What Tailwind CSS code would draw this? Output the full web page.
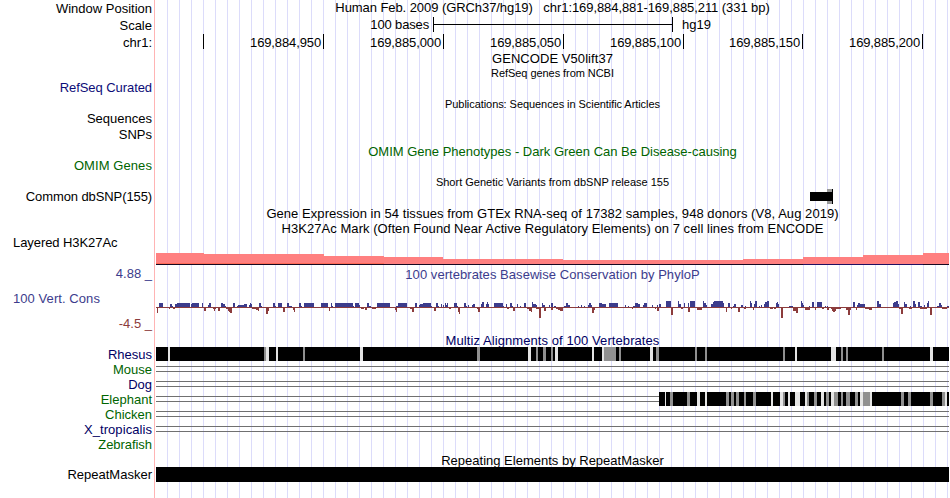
<!DOCTYPE html>
<html lang="en">
<head>
<meta charset="utf-8">
<title>Genome Browser</title>
<script src="https://cdn.jsdelivr.net/npm/@tailwindcss/browser@4"></script>
</head>
<body class="bg-white overflow-hidden">
<main class="flex w-[950px] h-[498px] overflow-hidden bg-white text-black text-[13px] leading-[15px] whitespace-nowrap font-['Liberation_Sans',Arial,sans-serif]">

  <!-- track labels -->
  <aside class="w-[154px] h-full shrink-0 flex flex-col items-end pt-px pr-[2px]">
    <div>Window Position</div>
    <div class="mt-[2px]">Scale</div>
    <div class="mt-[2px]">chr1:</div>
    <div class="mt-[30px] tracking-[-0.07px] text-[#0c0c78]">RefSeq Curated</div>
    <div class="mt-[16px]">Sequences</div>
    <div class="mt-px">SNPs</div>
    <div class="mt-[16px] tracking-[0.08px] text-[#006400]">OMIM Genes</div>
    <div class="mt-[16px] tracking-[-0.1px]">Common dbSNP(155)</div>
    <div class="mt-[31px] self-start pl-[13px] tracking-[-0.07px]">Layered H3K27Ac</div>
    <div class="mt-[16px] text-[#3c3c8c]">4.88 _</div>
    <div class="mt-[10px] self-start pl-[13px] tracking-[0.07px] text-[#3c3c8c]">100 Vert. Cons</div>
    <div class="mt-[10px] text-[#8c3c3c]">-4.5 _</div>
    <div class="mt-[16px] text-[#000064]">Rhesus</div>
    <div class="text-[#006400]">Mouse</div>
    <div class="text-[#000064]">Dog</div>
    <div class="text-[#006400]">Elephant</div>
    <div class="text-[#006400]">Chicken</div>
    <div class="tracking-[0.07px] text-[#000064]">X_tropicalis</div>
    <div class="tracking-[-0.05px] text-[#006400]">Zebrafish</div>
    <div class="mt-[15px]">RepeatMasker</div>
  </aside>
  <div class="w-px mr-px h-full shrink-0 bg-[#ffb4b4]"></div>

  <!-- tracks over the 5-base guide lines -->
  <section class="w-[793px] h-full shrink-0 flex flex-col text-center bg-[linear-gradient(to_right,#dcdcfa_1px,transparent_1px)] bg-[size:12px_12px] bg-[position:11px_0]">
    <div class="h-[17px] whitespace-pre tracking-[-0.07px]">Human Feb. 2009 (GRCh37/hg19)   chr1:169,884,881-169,885,211 (331 bp)</div>
    <div class="h-[17px] flex">
      <div class="w-[277px] pr-[4px] text-right tracking-[-0.15px]">100 bases</div>
      <div class="w-[240px] h-[15px] border-x border-black flex items-center"><div class="w-full h-px bg-black"></div></div>
      <div class="pl-[9px]">hg19</div>
    </div>
    <div class="h-[17px] flex text-right tracking-[-0.12px] [&>div]:h-[15px] [&>div]:border-r [&>div]:border-black [&>div]:pr-[2px] [&>div]:pt-px">
      <div class="w-[48px]"></div>
      <div class="w-[120px]">169,884,950</div>
      <div class="w-[120px]">169,885,000</div>
      <div class="w-[120px]">169,885,050</div>
      <div class="w-[120px]">169,885,100</div>
      <div class="w-[119px]">169,885,150</div>
      <div class="w-[120px]">169,885,200</div>
    </div>
    <div class="h-[16px] tracking-[0.06px]">GENCODE V50lift37</div>
    <div class="h-[31px] text-[11px] leading-[13px] tracking-[-0.06px]">RefSeq genes from NCBI</div>
    <div class="h-[46px] text-[11px] leading-[13px] tracking-[-0.06px]">Publications: Sequences in Scientific Articles</div>
    <div class="h-[32px] text-[#006400]">OMIM Gene Phenotypes - Dark Green Can Be Disease-causing</div>
    <div class="h-[13px] text-[11px] leading-[13px]">Short Genetic Variants from dbSNP release 155</div>
    <svg class="block w-full h-[17px] shrink-0" viewBox="156 189 793 17" shape-rendering="crispEdges">
      <path d="M827 189h5v15h-5z" fill="#999"/><path d="M810 192h22v9h-22zM832 189h1v15h-1z"/>
    </svg>
    <div class="h-[15px] tracking-[0.055px]">Gene Expression in 54 tissues from GTEx RNA-seq of 17382 samples, 948 donors (V8, Aug 2019)</div>
    <div class="h-[15px] tracking-[0.05px]">H3K27Ac Mark (Often Found Near Active Regulatory Elements) on 7 cell lines from ENCODE</div>
    <svg class="block w-full h-[31px] shrink-0" viewBox="156 236 793 31" shape-rendering="crispEdges">
      <path fill="#ff8080" d="M156 264V253H204V254H324V256H384V257H443V259H563V260H743V259H803V257H863V255H923V253H949V264z"/>
      <path fill="#ff6b57" d="M156 263h228v1h-228z"/>
      <path fill="#180820" d="M156 264h793v1h-793z"/><path fill="#201060" d="M803 264h120v1h-120z"/>
    </svg>
    <div class="h-[15px] tracking-[0.05px] text-[#3c3c8c]">100 vertebrates Basewise Conservation by PhyloP</div>
    <svg id="phylop" class="block w-full h-[51px] shrink-0" viewBox="156 282 793 51" shape-rendering="crispEdges"></svg>
    <div class="h-[14px] tracking-[0.08px] text-[#000064]">Multiz Alignments of 100 Vertebrates</div>
    <svg id="multiz" class="block w-full h-[106px] shrink-0" viewBox="156 347 793 106" shape-rendering="crispEdges"></svg>
    <div class="h-[14px]">Repeating Elements by RepeatMasker</div>
    <div class="h-[15px] bg-black"></div>
  </section>
</main>
<script>
const box = (x, y, w, h, c) => `<rect x="${x}" y="${y}" width="${w}" height="${h}" fill="${c}"/>`;

// conservation scores: start, end, height
const up = `159 163 4,170 172 3,172 173 1,175 180 3,177 190 4,191 192 3,192 199 4,202 203 4,208 209 2,209 211 4,221 223 4,223 225 3,225 226 1,233 235 4,237 238 1,238 247 2,244 247 3,249 250 2,250 251 4,251 252 3,259 261 4,261 262 1,273 275 4,275 276 1,278 282 4,287 289 4,289 292 1,299 301 4,301 302 1,304 314 4,304 305 2,321 328 4,331 332 4,332 333 1,335 353 4,353 354 1,355 359 4,359 360 2,367 369 4,369 371 1,377 390 4,398 407 4,396 398 1,415 417 4,419 421 2,420 423 3,423 431 4,431 432 1,436 438 4,438 439 1,441 442 3,443 444 2,445 446 4,446 448 2,447 448 4,454 457 4,457 458 1,464 466 4,466 467 1,468 469 2,472 474 2,473 475 3,481 482 3,482 484 5,486 487 3,487 488 5,488 489 3,494 503 4,503 504 1,506 507 3,510 512 4,512 513 1,517 518 3,520 521 1,524 526 4,532 533 5,533 536 3,536 537 2,542 543 4,543 545 2,549 550 2,551 553 4,554 556 1,564 566 1,566 568 4,568 570 2,578 579 1,581 582 2,584 585 1,588 589 2,589 591 4,591 592 2,599 602 4,602 606 3,609 618 4,625 626 2,628 629 1,633 635 1,635 638 4,638 640 3,643 644 2,644 647 4,652 653 2,657 658 2,659 661 3,666 671 6,668 670 4,678 679 6,679 681 3,684 685 4,688 689 4,690 695 6,703 704 6,704 706 4,706 707 2,711 713 3,713 714 5,714 723 6,723 724 4,728 730 4,733 734 1,734 736 3,741 743 2,745 746 1,750 751 6,751 752 4,754 755 3,755 757 6,759 760 1,761 762 2,764 765 3,765 767 5,767 769 6,776 777 4,777 779 3,777 778 5,789 793 1,801 802 6,802 803 4,803 804 2,809 810 1,812 814 5,817 822 5,825 826 1,827 828 1,853 855 5,857 858 2,858 860 4,860 865 3,877 879 6,879 881 3,893 894 4,894 896 5,896 898 6,898 899 3,904 905 5,905 907 3,910 911 1,913 915 6,915 916 3,918 920 5,920 922 1,924 925 2,927 928 4,928 929 6,937 939 1,939 941 4,941 942 2,947 949 1`;
const down = `157 158 6,169 170 2,173 175 2,204 206 4,213 216 2,214 215 4,218 220 4,226 228 2,228 229 4,229 232 5,230 232 6,252 256 2,256 258 3,258 259 4,266 268 7,268 269 4,283 285 5,293 295 3,294 295 5,329 330 4,361 364 2,365 367 3,372 376 2,395 396 3,396 397 5,410 412 2,412 414 5,434 436 4,449 451 2,458 459 5,459 460 7,477 478 2,478 480 5,507 509 2,513 515 4,527 529 2,529 531 4,531 532 5,536 539 2,539 541 11,544 546 4,551 553 3,556 558 2,558 563 3,560 563 4,592 594 6,594 595 3,632 633 2,655 656 2,657 659 4,671 673 8,681 683 2,688 690 5,697 702 3,718 719 1,726 727 5,731 732 2,738 740 5,744 746 2,753 754 3,770 773 2,774 776 2,781 783 11,793 798 4,796 798 6,805 810 3,815 816 3,822 824 2,827 829 3,831 841 2,832 836 4,833 835 5,846 851 3,848 850 8,856 857 3,865 872 2,869 872 3,899 903 2,901 903 7,909 912 2,920 927 2,930 932 8,942 947 2`;
const runs = s => s.split(',').map(r => r.trim().split(' ').map(Number));
document.getElementById('phylop').innerHTML =
  box(156, 307, 793, 1, '#8c3c3c') +
  runs(up).map(([a, b, h]) => box(a, 307 - h, b - a, h, '#3c3c8c')).join('') +
  runs(down).map(([a, b, h]) => box(a, 307, b - a, h, '#8c3c3c')).join('');

// alignment identity: start, end, shade (1 = no match, 0 = partial)
const rhesus = '168 170 1,264 266 0,266 269 1,276 278 1,303 305 0,360 363 1,477 480 0,528 531 1,536 538 0,543 546 0,551 553 0,555 558 1,592 594 1,602 604 1,604 616 0,619 621 0,650 653 1,656 659 0,695 697 0,705 707 0,783 785 0,795 797 1,831 836 1,841 843 0,846 848 0,882 884 0,930 933 1';
const elephant = '665 666 1,670 673 0,687 690 0,697 700 1,705 707 1,726 729 0,731 734 0,736 739 0,744 746 0,753 756 0,771 773 1,780 783 1,783 785 0,788 790 1,795 800 1,805 807 1,807 809 0,814 817 0,821 824 1,826 829 0,831 834 1,834 838 0,841 843 0,846 850 0,855 858 0,860 863 1,863 870 0,870 872 1,901 904 0,908 911 0,930 933 0,942 945 0,945 947 1';
const stripes = (s, y) => runs(s).map(([a, b, k]) => box(a, y, b - a, 14, k ? '#e4e4e4' : '#909090')).join('');
document.getElementById('multiz').innerHTML =
  [366, 381, 396, 411, 426].map(y => box(156, y, 793, 1, '#707070') + box(156, y + 5, 793, 1, '#707070')).join('') +
  box(156, 347, 793, 14, '#000') + stripes(rhesus, 347) +
  box(659, 392, 290, 14, '#000') + stripes(elephant, 392);
</script>
</body>
</html>
